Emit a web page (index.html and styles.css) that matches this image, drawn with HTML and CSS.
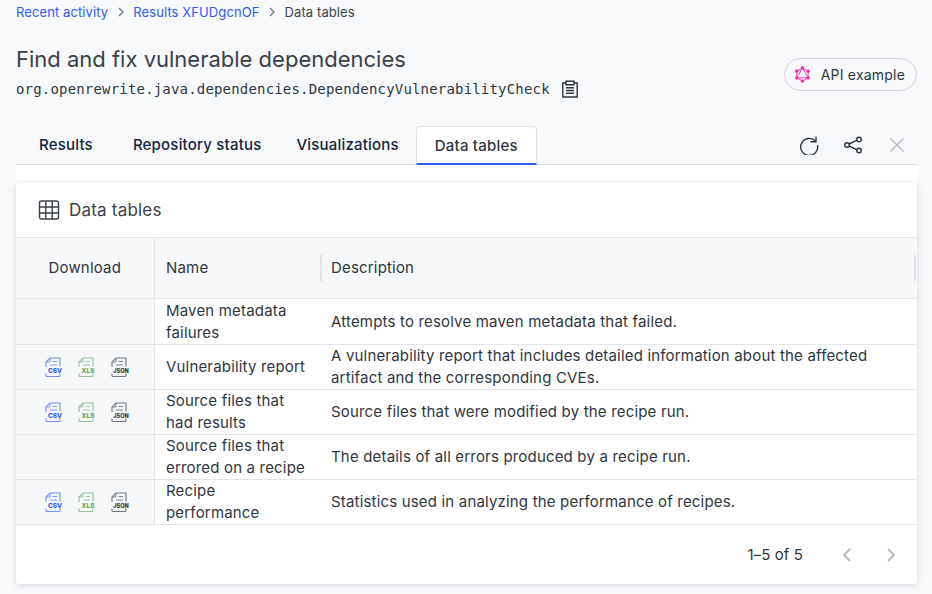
FILE: index.html
```html
<!DOCTYPE html>
<html lang="en">
<head>
    <meta charset="UTF-8">
    <meta name="viewport" content="width=device-width, initial-scale=1.0">
    <title>Data tables</title>
    <link rel="stylesheet" href="styles.css">
</head>
<body>
    <svg class="sprites" width="0" height="0">
        <symbol id="file" viewBox="0 0 20 20">
            <path d="M3 10V5L7 1H17V9.500M3 16.500V18.500C3 19 3.500 19.500 4 19.500H16C16.500 19.500 17 19 17 18.500V16.500" fill="none" stroke="currentColor" stroke-width="1.100"/>
            <path d="M3 5H7V1M9.500 4.500H14M7 8H14" fill="none" stroke="currentColor" stroke-width="0.900"/>
        </symbol>
    </svg>

    <nav class="breadcrumb">
        <a href="#">Recent activity</a>
        <svg class="crumb-arrow" viewBox="0 0 8 10"><path d="M2 1L6 5L2 9" /></svg>
        <a href="#">Results XFUDgcnOF</a>
        <svg class="crumb-arrow" viewBox="0 0 8 10"><path d="M2 1L6 5L2 9" /></svg>
        <span>Data tables</span>
    </nav>

    <header class="page-head">
        <div>
            <h1>Find and fix vulnerable dependencies</h1>
            <div class="recipe-id">
                <code>org.openrewrite.java.dependencies.DependencyVulnerabilityCheck</code>
                <svg class="icon-clip" viewBox="0 0 18 18">
                    <path d="M5 3H1.800V17H16.200V3H13" />
                    <path d="M5 1.200H13V4.800H5Z" />
                    <path d="M5 7.800H13M5 10.500H13M5 13.200H13" />
                </svg>
            </div>
        </div>
        <a class="api-btn" href="#">
            <svg viewBox="0 0 18 18" class="icon-gql">
                <path d="M9 2L15 5.500V12.500L9 16L3 12.500V5.500Z" />
                <path d="M9 2L15 12.500H3Z" />
                <circle cx="9" cy="2" r="1.400" />
                <circle cx="15" cy="5.500" r="1.400" />
                <circle cx="15" cy="12.500" r="1.400" />
                <circle cx="9" cy="16" r="1.400" />
                <circle cx="3" cy="12.500" r="1.400" />
                <circle cx="3" cy="5.500" r="1.400" />
            </svg>
            API example
        </a>
    </header>

    <div class="tabs">
        <a class="tab tab-results" href="#">Results</a>
        <a class="tab tab-repo" href="#">Repository status</a>
        <a class="tab tab-vis" href="#">Visualizations</a>
        <a class="tab active" href="#">Data tables</a>
        <div class="tab-actions">
            <svg class="icon-action" viewBox="0 0 20 20">
                <path d="M17 1.500V6.700H11.500" class="thin" />
                <path d="M16.600 6.300A8.500 8.500 0 1 0 18.500 10" class="thin" />
            </svg>
            <svg class="icon-action" viewBox="0 0 20 20">
                <path d="M14 5.200L6 9M6 11L14 14.800" class="thin" />
                <circle cx="16" cy="4.500" r="2.300" class="thin" />
                <circle cx="4" cy="10" r="2.300" class="thin" />
                <circle cx="16" cy="15.500" r="2.300" class="thin" />
            </svg>
            <svg class="icon-action muted" viewBox="0 0 20 20">
                <path d="M3.500 3.500L16.500 16.500M16.500 3.500L3.500 16.500" class="thin" />
            </svg>
        </div>
    </div>

    <div class="panel">
        <section class="card">
            <div class="card-title">
                <svg class="icon-grid" viewBox="0 0 22 22">
                    <rect x="1.500" y="2" width="19" height="18" rx="2" />
                    <path d="M1.500 8H20.500M1.500 14H20.500M7.800 2V20M14.200 2V20" />
                </svg>
                Data tables
            </div>
            <table class="data-table">
                <thead>
                    <tr>
                        <th class="col-download">Download</th>
                        <th class="col-name">Name</th>
                        <th class="col-desc"><span>Description</span></th>
                    </tr>
                </thead>
                <tbody>
                    <tr>
                        <td class="col-download"></td>
                        <td class="col-name">Maven metadata failures</td>
                        <td>Attempts to resolve maven metadata that failed.</td>
                    </tr>
                    <tr>
                        <td class="col-download">
                            <div class="downloads">
                                <svg class="file csv" viewBox="0 0 20 20"><use href="#file" /><text x="12" y="16">CSV</text></svg>
                                <svg class="file xls" viewBox="0 0 20 20"><use href="#file" /><text x="12" y="16">XLS</text></svg>
                                <svg class="file json" viewBox="0 0 20 20"><use href="#file" /><text x="12" y="16">JSON</text></svg>
                            </div>
                        </td>
                        <td class="col-name">Vulnerability report</td>
                        <td>A vulnerability report that includes detailed information about the affected artifact and the corresponding CVEs.</td>
                    </tr>
                    <tr>
                        <td class="col-download">
                            <div class="downloads">
                                <svg class="file csv" viewBox="0 0 20 20"><use href="#file" /><text x="12" y="16">CSV</text></svg>
                                <svg class="file xls" viewBox="0 0 20 20"><use href="#file" /><text x="12" y="16">XLS</text></svg>
                                <svg class="file json" viewBox="0 0 20 20"><use href="#file" /><text x="12" y="16">JSON</text></svg>
                            </div>
                        </td>
                        <td class="col-name">Source files that had results</td>
                        <td>Source files that were modified by the recipe run.</td>
                    </tr>
                    <tr>
                        <td class="col-download"></td>
                        <td class="col-name">Source files that errored on a recipe</td>
                        <td>The details of all errors produced by a recipe run.</td>
                    </tr>
                    <tr>
                        <td class="col-download">
                            <div class="downloads">
                                <svg class="file csv" viewBox="0 0 20 20"><use href="#file" /><text x="12" y="16">CSV</text></svg>
                                <svg class="file xls" viewBox="0 0 20 20"><use href="#file" /><text x="12" y="16">XLS</text></svg>
                                <svg class="file json" viewBox="0 0 20 20"><use href="#file" /><text x="12" y="16">JSON</text></svg>
                            </div>
                        </td>
                        <td class="col-name">Recipe performance</td>
                        <td>Statistics used in analyzing the performance of recipes.</td>
                    </tr>
                </tbody>
            </table>
            <div class="pager">
                <span class="pager-count">1–5 of 5</span>
                <svg class="pager-arrow" viewBox="0 0 12 16"><path d="M9 2L3 8L9 14" /></svg>
                <svg class="pager-arrow" viewBox="0 0 12 16"><path d="M3 2L9 8L3 14" /></svg>
            </div>
        </section>
    </div>
</body>
</html>
```

FILE: styles.css
```css
* {
    box-sizing: border-box;
}
html, body {
    height: 100%;
}
body {
    margin: 0;
    padding: 0 15px 0 16px;
    overflow: hidden;
    background-color: #f8f9fb;
    color: #2f3640;
    font-family: Inter, sans-serif;
    font-size: 15px;
}
a {
    text-decoration: none;
    color: inherit;
}
.sprites {
    position: absolute;
}

/* breadcrumb */
.breadcrumb {
    display: flex;
    align-items: center;
    height: 24px;
    font-size: 13px;
    letter-spacing: 0.1px;
    color: #3c434d;
}
.breadcrumb a {
    color: #2f5bf0;
}
.crumb-arrow {
    width: 8px;
    height: 10px;
    margin: 0 8.500px;
    fill: none;
    stroke: #6b7280;
    stroke-width: 1.200;
}

/* title */
.page-head {
    display: flex;
    justify-content: space-between;
    align-items: flex-start;
    height: 102px;
    padding-top: 21px;
}
h1 {
    margin: 0;
    height: 29px;
    font-size: 22px;
    line-height: 29px;
    font-weight: 400;
    color: #3a4149;
}
.recipe-id {
    display: flex;
    align-items: center;
    gap: 11px;
    margin-top: 6px;
}
code {
    font-family: "DejaVu Sans Mono", monospace;
    font-size: 14px;
    letter-spacing: 0.180px;
    color: #2f3640;
}
.icon-clip {
    width: 18px;
    height: 18px;
    fill: none;
    stroke: #2f3640;
    stroke-width: 1.400;
}
.api-btn {
    display: flex;
    align-items: center;
    gap: 10px;
    height: 33px;
    margin-top: 13px;
    padding: 0 11px 0 9px;
    border: 1px solid #cfd3d9;
    border-radius: 17px;
    font-size: 14px;
    letter-spacing: 0.200px;
}
.icon-gql {
    width: 17px;
    height: 17px;
    fill: none;
    stroke: #e535ab;
    stroke-width: 1;
}
.icon-gql circle {
    fill: #e535ab;
}

/* tabs */
.tabs {
    display: flex;
    align-items: stretch;
    height: 39px;
    border-bottom: 1px solid #d9dce1;
}
.tab {
    display: flex;
    align-items: center;
    padding-bottom: 2px;
    font-size: 15px;
    font-weight: 500;
    letter-spacing: 0.200px;
    color: #14243e;
}
.tab-results {
    padding-left: 23px;
    padding-right: 20px;
}
.tab-repo {
    padding-left: 20px;
    padding-right: 17px;
}
.tab-vis {
    padding-left: 18px;
    padding-right: 17px;
}
.tab.active {
    height: 39px;
    padding: 1px 18px 0;
    background-color: #fff;
    border: 1px solid #dfe2e6;
    border-bottom: 2px solid #2f5bf0;
    border-radius: 4px 4px 0 0;
    color: #2f3640;
}
.tab-actions {
    display: flex;
    align-items: center;
    gap: 24px;
    margin-left: auto;
    padding-right: 10px;
}
.icon-action {
    width: 20px;
    height: 20px;
    color: #2f3640;
}
.icon-action.muted {
    color: #b9bcc1;
}
.thin {
    fill: none;
    stroke: currentColor;
    stroke-width: 1.400;
}

/* card */
.panel {
    padding-top: 18px;
    background-color: #fff;
}
.card {
    background-color: #fff;
    border-radius: 4px;
    box-shadow: 0 1px 6px rgba(20, 30, 50, 0.14);
}
.card-title {
    display: flex;
    align-items: center;
    gap: 9px;
    height: 54px;
    padding-left: 22px;
    font-size: 17px;
    letter-spacing: 0.200px;
    color: #3a4149;
}
.icon-grid {
    width: 22px;
    height: 22px;
    fill: none;
    stroke: #3a4149;
    stroke-width: 1.400;
}

/* table */
.data-table {
    width: 100%;
    table-layout: fixed;
    border-collapse: collapse;
    font-size: 15px;
    line-height: 22px;
    letter-spacing: 0.180px;
}
.data-table th {
    height: 61px;
    padding: 0 11px;
    background-color: #f7f8fa;
    border-top: 1px solid #e2e4e8;
    border-bottom: 1px solid #e2e4e8;
    font-weight: 400;
    text-align: left;
}
.data-table td {
    height: 45px;
    padding: 0 11px;
    border-bottom: 1px solid #e2e4e8;
    vertical-align: middle;
}
.data-table tbody tr:first-child td {
    height: 46px;
}
.col-download {
    width: 138px;
    border-right: 1px solid #e2e4e8;
    text-align: center;
    background-color: #f7f8fa;
}
.data-table th.col-download {
    text-align: center;
}
.data-table .col-name {
    width: 166px;
    padding-left: 11.500px;
}
.col-desc span {
    display: block;
    margin: 0 -10px 0 -11px;
    padding-left: 9px;
    border-left: 2px solid #e2e4e8;
    border-right: 2px solid #e2e4e8;
    line-height: 26px;
}
.downloads {
    display: flex;
    justify-content: center;
    gap: 13px;
    padding-left: 2px;
}
.file {
    width: 20px;
    height: 20px;
}
.file use {
    opacity: 0.650;
}
.file text {
    font-family: Inter, sans-serif;
    font-size: 6.500px;
    font-weight: 800;
    letter-spacing: 0;
    text-anchor: middle;
    fill: currentColor;
}
.file.json text {
    font-size: 5.500px;
}
.csv {
    color: #2f5bf0;
}
.xls {
    color: #5fa56b;
}
.json {
    color: #2f3640;
}

/* pager */
.pager {
    display: flex;
    align-items: center;
    justify-content: flex-end;
    height: 59px;
    padding-right: 20px;
    font-size: 15px;
    letter-spacing: 0.100px;
}
.pager-arrow {
    width: 12px;
    height: 16px;
    margin-left: 32px;
    fill: none;
    stroke: #b5b8bd;
    stroke-width: 1.800;
}
.pager-count {
    margin-right: 6px;
}
```
